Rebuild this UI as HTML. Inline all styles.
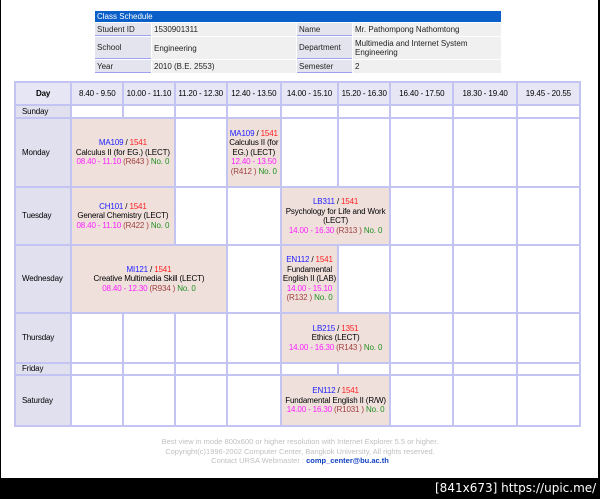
<!DOCTYPE html>
<html><head><meta charset="utf-8"><style>
body{margin:0;width:600px;height:499px;background:#fff;font-family:"Liberation Sans",Tahoma,sans-serif;font-size:8.5px;color:#000;position:relative;overflow:hidden}
.frame{position:absolute;left:0;top:0;width:597px;height:478px;border-left:1px solid #000;border-right:2px solid #000}
.info{position:absolute;left:94px;top:10px;width:408px;border-collapse:separate;border-spacing:1px;}
.info td{background:#f0f0f0;padding:0 2px;font-size:8px;color:#222}
.info td.l{background:#e4e4ee;border-bottom:1px solid #a0a0f0}
.info tr.h td{background:#0a5fc8;color:#fff;height:11px}
.main{position:absolute;left:14px;top:81px;width:567px;border-collapse:separate;border-spacing:2px;background:#c4c4f2;table-layout:fixed}
.main td{background:#fff;padding:0;text-align:center;vertical-align:middle;font-size:8px;line-height:9.5px;overflow:hidden;letter-spacing:-0.15px}
.main tr.hd td{background:#e6e6f4}
.main td.d{background:#e0e0ee;text-align:left;padding-left:6px}
.main tr.hd td.d{text-align:center;padding:0;font-weight:bold}
.main td.c{background:#efe0dc}
.b{color:#2020ff}.r{color:#ff2020}.m{color:#ff20ff}.br{color:#a04040}.g{color:#209020}
.foot{position:absolute;left:0;width:600px;top:437px;text-align:center;color:#c0c0c0;font-size:7.5px;line-height:9.5px}
.foot b{color:#1040c0}
.bar{position:absolute;left:0;top:478px;width:600px;height:21px;background:#000;color:#fff;font-size:12px;text-align:right;line-height:21px;font-family:"DejaVu Sans",sans-serif}
</style></head><body>
<div class="frame"></div>
<table class="info">
<tr class="h"><td colspan="4">Class Schedule</td></tr>
<tr style="height:13px"><td class="l" style="width:52px">Student ID</td><td style="width:140px">1530901311</td><td class="l" style="width:51px">Name</td><td>Mr. Pathompong Nathomtong</td></tr>
<tr style="height:22px"><td class="l">School</td><td>Engineering</td><td class="l">Department</td><td>Multimedia and Internet System Engineering</td></tr>
<tr style="height:13px"><td class="l">Year</td><td>2010 (B.E. 2553)</td><td class="l">Semester</td><td>2</td></tr>
</table>
<table class="main">
<colgroup><col style="width:54px"><col style="width:50px"><col style="width:49px"><col style="width:50px"><col style="width:52px"><col style="width:55px"><col style="width:50px"><col style="width:61px"><col style="width:61px"><col style="width:61px"></colgroup>
<tr class="hd" style="height:21px"><td class="d">Day</td><td>8.40 - 9.50</td><td>10.00 - 11.10</td><td>11.20 - 12.30</td><td>12.40 - 13.50</td><td>14.00 - 15.10</td><td>15.20 - 16.30</td><td>16.40 - 17.50</td><td>18.30 - 19.40</td><td>19.45 - 20.55</td></tr>
<tr style="height:11px"><td class="d">Sunday</td><td></td><td></td><td></td><td></td><td></td><td></td><td></td><td></td><td></td></tr>
<tr style="height:67px"><td class="d">Monday</td><td class="c" colspan="2"><span class="b">MA109</span> / <span class="r">1541</span><br>Calculus II (for EG.) (LECT)<br><span class="m">08.40 - 11.10</span> <span class="br">(R643 )</span> <span class="g">No. 0</span></td><td></td><td class="c"><span class="b">MA109</span> / <span class="r">1541</span><br>Calculus II (for<br>EG.) (LECT)<br><span class="m">12.40 - 13.50</span><br><span class="br">(R412 )</span> <span class="g">No. 0</span></td><td></td><td></td><td></td><td></td><td></td></tr>
<tr style="height:56px"><td class="d">Tuesday</td><td class="c" colspan="2"><span class="b">CH101</span> / <span class="r">1541</span><br>General Chemistry (LECT)<br><span class="m">08.40 - 11.10</span> <span class="br">(R422 )</span> <span class="g">No. 0</span></td><td></td><td></td><td class="c" colspan="2"><span class="b">LB311</span> / <span class="r">1541</span><br>Psychology for Life and Work<br>(LECT)<br><span class="m">14.00 - 16.30</span> <span class="br">(R313 )</span> <span class="g">No. 0</span></td><td></td><td></td><td></td></tr>
<tr style="height:66px"><td class="d">Wednesday</td><td class="c" colspan="3"><span class="b">MI121</span> / <span class="r">1541</span><br>Creative Multimedia Skill (LECT)<br><span class="m">08.40 - 12.30</span> <span class="br">(R934 )</span> <span class="g">No. 0</span></td><td></td><td class="c"><span class="b">EN112</span> / <span class="r">1541</span><br>Fundamental<br>English II (LAB)<br><span class="m">14.00 - 15.10</span><br><span class="br">(R132 )</span> <span class="g">No. 0</span></td><td></td><td></td><td></td><td></td></tr>
<tr style="height:48px"><td class="d">Thursday</td><td></td><td></td><td></td><td></td><td class="c" colspan="2"><span class="b">LB215</span> / <span class="r">1351</span><br>Ethics (LECT)<br><span class="m">14.00 - 16.30</span> <span class="br">(R143 )</span> <span class="g">No. 0</span></td><td></td><td></td><td></td></tr>
<tr style="height:10px"><td class="d">Friday</td><td></td><td></td><td></td><td></td><td></td><td></td><td></td><td></td><td></td></tr>
<tr style="height:49px"><td class="d">Saturday</td><td></td><td></td><td></td><td></td><td class="c" colspan="2"><span class="b">EN112</span> / <span class="r">1541</span><br>Fundamental English II (R/W)<br><span class="m">14.00 - 16.30</span> <span class="br">(R1031 )</span> <span class="g">No. 0</span></td><td></td><td></td><td></td></tr>
</table>
<div class="foot">Best view in mode 800x600 or higher resolution with Internet Explorer 5.5 or higher.<br>Copyright(c)1996-2002 Computer Center, Bangkok University, All rights reserved.<br>Contact URSA Webmaster : <b>comp_center@bu.ac.th</b></div>
<div class="bar">[841x673] https://upic.me/&nbsp;</div>
</body></html>
